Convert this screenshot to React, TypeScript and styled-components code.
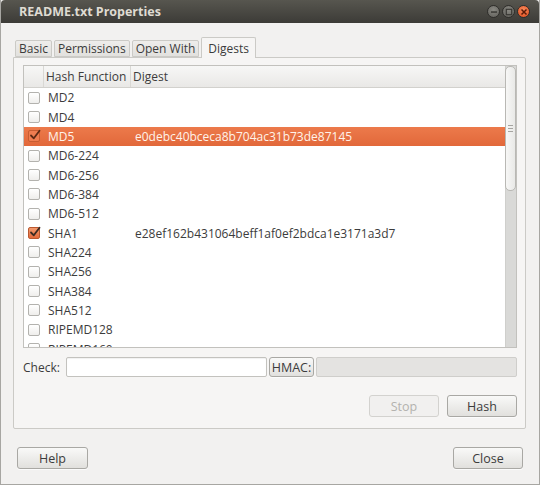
import * as React from 'react'
import styled, { createGlobalStyle } from 'styled-components'

const GlobalStyle = createGlobalStyle`
  html, body {
    margin: 0;
    padding: 0;
    background: #f2f1f0;
  }
  * {
    box-sizing: border-box;
  }
`

const font = `"Open Sans", "DejaVu Sans", sans-serif`

const Window = styled.div`
  width: 540px;
  height: 485px;
  display: flex;
  flex-direction: column;
  background: #f2f1f0;
  border: 1px solid #a7a6a2;
  border-top: 0;
  font-family: ${font};
  font-size: 12px;
  color: #3c3c3c;
  overflow: hidden;
`

const TitleBar = styled.div`
  height: 23px;
  flex: none;
  display: flex;
  align-items: center;
  justify-content: space-between;
  padding: 0 9px 0 18px;
  background: linear-gradient(#57564f, #3c3b37);
  border-radius: 4px 4px 0 0;
`

const Title = styled.div`
  color: #dfdbd2;
  font-weight: 700;
  font-size: 12.5px;
`

const Controls = styled.div`
  display: flex;
  gap: 2px;
`

const Control = styled.div<{ $close?: boolean }>`
  width: 13px;
  height: 13px;
  border-radius: 50%;
  display: flex;
  align-items: center;
  justify-content: center;
  background: ${p => (p.$close ? 'radial-gradient(circle at 50% 35%, #f58a5d, #df4a1a)' : 'radial-gradient(circle at 50% 35%, #8a8983, #5f5e59)')};
  border: 1px solid #2f2e2b;
`

const Body = styled.div`
  flex: 1;
  display: flex;
  flex-direction: column;
  padding: 14px 13px 0 12px;
`

const TabBar = styled.div`
  display: flex;
  align-items: flex-end;
  height: 20px;
  padding-left: 2px;
  gap: 2px;
`

const Tab = styled.div<{ $active?: boolean }>`
  height: ${p => (p.$active ? '21px' : '17px')};
  margin-bottom: ${p => (p.$active ? '-1px' : '0')};
  padding: 0 ${p => (p.$active ? '6px' : '3px')};
  display: flex;
  align-items: center;
  border: 1px solid #cbcac6;
  border-bottom: ${p => (p.$active ? '0' : '1px solid #cbcac6')};
  border-radius: 2px 2px 0 0;
  background: ${p => (p.$active ? '#f6f5f4' : 'linear-gradient(#eeedeb, #e2e1de)')};
  color: #3c3c3c;
  font-size: 12px;
  position: relative;
  z-index: ${p => (p.$active ? 1 : 0)};
`

const Frame = styled.div`
  height: 372px;
  border: 1px solid #cbcac6;
  border-radius: 0 2px 2px 2px;
  background: #f6f5f4;
  padding: 7px 8px 0 9px;
  display: flex;
  flex-direction: column;
`

const TreeBox = styled.div`
  height: 283px;
  flex: none;
  display: flex;
  border: 1px solid #c2c1bd;
  background: #fff;
  overflow: hidden;
`

const TreeList = styled.div`
  flex: 1;
  overflow: hidden;
`

const HeaderRow = styled.div`
  height: 22px;
  display: grid;
  grid-template-columns: 20px 87px 1fr;
  background: linear-gradient(#f7f7f6, #e9e8e6);
  border-bottom: 1px solid #d2d1cd;
`

const HeaderCell = styled.div`
  display: flex;
  align-items: center;
  padding-left: 2px;
  border-right: 1px solid #d9d8d4;
  color: #3c3c3c;
  &:last-child {
    border-right: 0;
  }
`

const Row = styled.div<{ $selected?: boolean }>`
  height: 19.35px;
  display: grid;
  grid-template-columns: 20px 87px 1fr;
  align-items: center;
  background: ${p => (p.$selected ? 'linear-gradient(#ec7a4b, #e2683a)' : 'transparent')};
  color: ${p => (p.$selected ? '#fff3ea' : '#3c3c3c')};
  white-space: nowrap;
`

const CheckCell = styled.div`
  display: flex;
  justify-content: flex-start;
  padding-left: 4px;
`

const Box = styled.div<{ $checked?: boolean; $selected?: boolean }>`
  width: 12px;
  height: 12px;
  border-radius: 2px;
  border: 1px solid ${p => (p.$checked && !p.$selected ? '#b9582f' : p.$selected ? '#c85d32' : '#b3b2ae')};
  background: ${p =>
    p.$selected ? '#ef7d50' : p.$checked ? 'linear-gradient(#f39a6e, #e36a3b)' : 'linear-gradient(#ffffff, #efeeec)'};
  position: relative;
`

const NameCell = styled.div`
  padding-left: 4px;
`

const DigestCell = styled.div`
  padding-left: 4px;
`

const ScrollTrack = styled.div`
  width: 11px;
  flex: none;
  background: #d9d9d7;
  border-left: 1px solid #cfcfcc;
  display: flex;
  flex-direction: column;
`

const ScrollThumb = styled.div`
  height: 125px;
  margin: 0 0 0 -1px;
  background: linear-gradient(90deg, #f7f7f6, #e9e9e7);
  border: 1px solid #b9b8b4;
  border-radius: 5px;
  display: flex;
  flex-direction: column;
  align-items: center;
  justify-content: center;
  gap: 2px;
`

const Grip = styled.div`
  width: 5px;
  height: 1px;
  background: #a6a5a1;
`

const CheckRow = styled.div`
  margin-top: 9px;
  height: 20px;
  display: flex;
  align-items: center;
  gap: 2px;
`

const Label = styled.div`
  width: 41px;
  flex: none;
  white-space: nowrap;
  color: #3c3c3c;
`

const Entry = styled.div<{ $disabled?: boolean; $width?: number }>`
  height: 20px;
  width: ${p => (p.$width ? `${p.$width}px` : 'auto')};
  flex: ${p => (p.$width ? 'none' : '1')};
  border: 1px solid ${p => (p.$disabled ? '#cfcecb' : '#c3c2be')};
  border-radius: 2px;
  background: ${p => (p.$disabled ? '#e4e3e1' : '#ffffff')};
  box-shadow: ${p => (p.$disabled ? 'none' : 'inset 0 1px 1px rgba(0,0,0,0.06)')};
`

const Button = styled.div<{ $width: number; $disabled?: boolean; $height?: number }>`
  width: ${p => p.$width}px;
  height: ${p => p.$height ?? 22}px;
  flex: none;
  display: flex;
  align-items: center;
  justify-content: center;
  border: 1px solid ${p => (p.$disabled ? '#d3d2cf' : '#a9a8a4')};
  border-radius: 3px;
  background: ${p => (p.$disabled ? '#f1f0ef' : 'linear-gradient(#f9f9f8, #e1e0dd)')};
  color: ${p => (p.$disabled ? '#b3b2ae' : '#3c3c3c')};
  box-shadow: ${p => (p.$disabled ? 'none' : '0 1px 0 rgba(255,255,255,0.7)')};
  font-size: 12.5px;
  white-space: nowrap;
`

const ActionRow = styled.div`
  margin-top: 18px;
  display: flex;
  justify-content: flex-end;
  gap: 8px;
`

const DialogButtons = styled.div`
  margin-top: 18px;
  display: flex;
  justify-content: space-between;
  padding: 0 3px 0 4px;
`

const Tick = ({ color }: { color: string }) => (
  <svg width="12" height="12" viewBox="0 0 12 12" style={{ position: 'absolute', left: 0, top: -2 }}>
    <path d="M2 6.5 L4.8 9.3 L10.5 1.8" fill="none" stroke={color} strokeWidth="1.8" strokeLinecap="round" strokeLinejoin="round" />
  </svg>
)

interface Hash {
  name: string
  digest?: string
  checked?: boolean
}

const hashes: Hash[] = [
  { name: 'MD2' },
  { name: 'MD4' },
  { name: 'MD5', digest: 'e0debc40bceca8b704ac31b73de87145', checked: true },
  { name: 'MD6-224' },
  { name: 'MD6-256' },
  { name: 'MD6-384' },
  { name: 'MD6-512' },
  { name: 'SHA1', digest: 'e28ef162b431064beff1af0ef2bdca1e3171a3d7', checked: true },
  { name: 'SHA224' },
  { name: 'SHA256' },
  { name: 'SHA384' },
  { name: 'SHA512' },
  { name: 'RIPEMD128' },
  { name: 'RIPEMD160' }
]

export default function App() {
  return (
    <>
      <GlobalStyle />
      <Window>
        <TitleBar>
          <Title>README.txt Properties</Title>
          <Controls>
            <Control>
              <svg width="8" height="8" viewBox="0 0 8 8">
                <rect x="1" y="3.3" width="6" height="1.5" fill="#3a3935" />
              </svg>
            </Control>
            <Control>
              <svg width="8" height="8" viewBox="0 0 8 8">
                <rect x="1.3" y="1.3" width="5.4" height="5.4" fill="none" stroke="#3a3935" strokeWidth="1.2" />
              </svg>
            </Control>
            <Control $close>
              <svg width="8" height="8" viewBox="0 0 8 8">
                <path d="M1.5 1.5 L6.5 6.5 M6.5 1.5 L1.5 6.5" stroke="#5a1a08" strokeWidth="1.5" />
              </svg>
            </Control>
          </Controls>
        </TitleBar>
        <Body>
          <TabBar>
            <Tab>Basic</Tab>
            <Tab>Permissions</Tab>
            <Tab>Open With</Tab>
            <Tab $active>Digests</Tab>
          </TabBar>
          <Frame>
            <TreeBox>
              <TreeList>
                <HeaderRow>
                  <HeaderCell />
                  <HeaderCell>Hash Function</HeaderCell>
                  <HeaderCell>Digest</HeaderCell>
                </HeaderRow>
                {hashes.map((h, i) => {
                  const selected = i === 2
                  return (
                    <Row key={h.name} $selected={selected}>
                      <CheckCell>
                        <Box $checked={h.checked} $selected={selected}>
                          {h.checked && <Tick color={selected ? '#5c2a14' : '#3b2a22'} />}
                        </Box>
                      </CheckCell>
                      <NameCell>{h.name}</NameCell>
                      <DigestCell>{h.digest ?? ''}</DigestCell>
                    </Row>
                  )
                })}
              </TreeList>
              <ScrollTrack>
                <ScrollThumb>
                  <Grip />
                  <Grip />
                  <Grip />
                </ScrollThumb>
              </ScrollTrack>
            </TreeBox>
            <CheckRow>
              <Label>Check:</Label>
              <Entry $width={201} />
              <Button $width={45} $height={20}>HMAC:</Button>
              <Entry $disabled />
            </CheckRow>
            <ActionRow>
              <Button $width={70} $disabled>Stop</Button>
              <Button $width={70}>Hash</Button>
            </ActionRow>
          </Frame>
          <DialogButtons>
            <Button $width={71}>Help</Button>
            <Button $width={70}>Close</Button>
          </DialogButtons>
        </Body>
      </Window>
    </>
  )
}
